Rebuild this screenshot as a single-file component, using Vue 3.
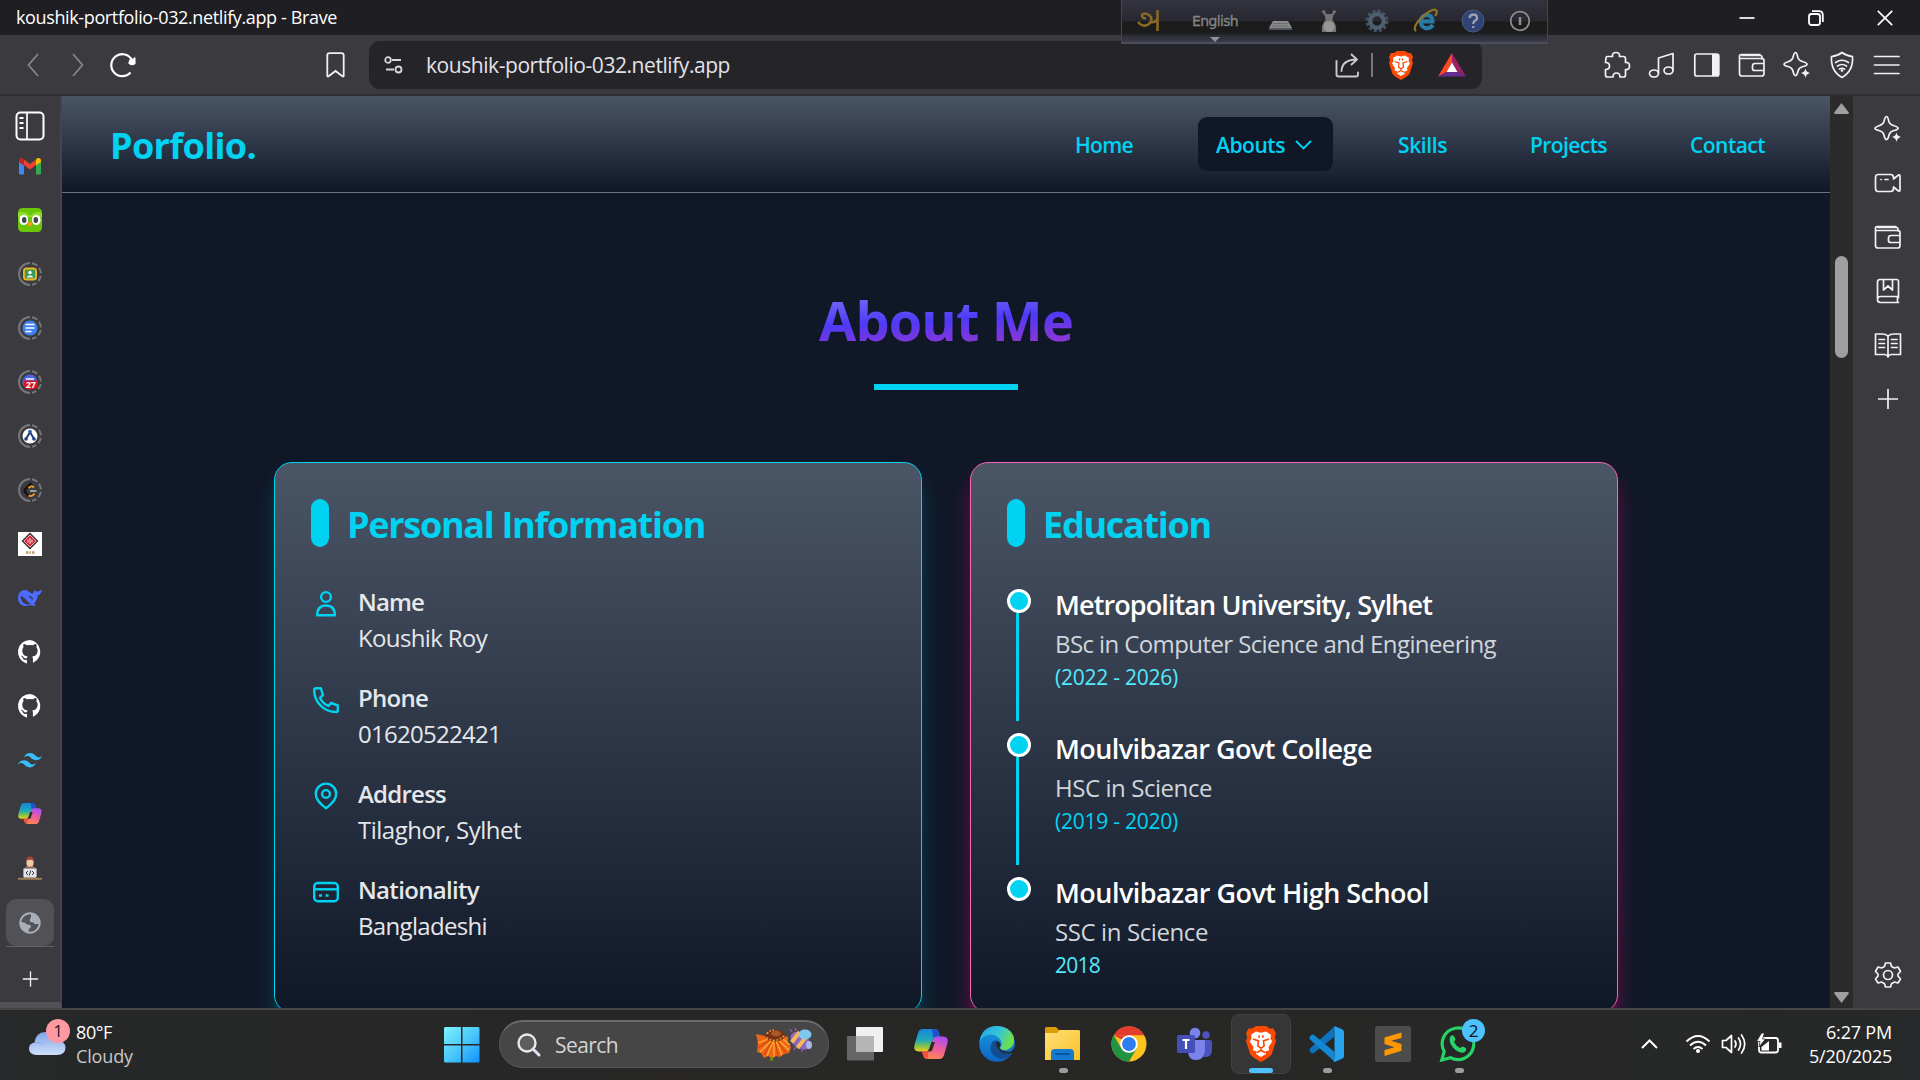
<script setup>
import { h } from 'vue'

const W = 'fill="none" stroke="#f1f1f4" stroke-width="1.7" stroke-linejoin="round" stroke-linecap="round"'
const lion = '<path d="M5 2 8 0H16L19 2 22 2 24 6 23 9 24 12 20.500 23Q18 26 12 29 6 26 3.500 23L0 12 1 9 0 6 2 2Z" fill="#fb4a05"/><path d="M8 4.500 12 5.500 16 4.500 20 7 19.500 10 21 12.500 18 17 18.500 19.500 15.500 20.500 16 22.500 12 25 8 22.500 8.500 20.500 5.500 19.500 6 17 3 12.500 4.500 10 4 7Z" fill="#fff"/><path d="M5.500 10.500 10 12 9.500 16 12 18 14.500 16 14 12 18.500 10.500M12 18V19.500M8.500 21.500 12 19.500 15.500 21.500M10.500 7.500V9.500M13.500 7.500V9.500" fill="none" stroke="#fb4a05" stroke-width="1.300"/>'
const wallet = `<path d="M4 4.500H22.500Q24 4.500 24 6V8M2 7.500H24Q26 7.500 26 9.500V22.500Q26 25 23.500 25H4Q1.500 25 1.500 22.500V5Q1.500 3.500 3.500 3.500H22M26 12.500H17Q14.500 12.500 14.500 15V17.500Q14.500 19.500 17 19.500H26" ${W}/>`
const sparkle = `<path d="M12.500 1.500C14 1.500 14.200 4 15 7 16 9.500 17.500 10 20 10.800 23 11.600 24 12 24 13.200S22.500 14.800 20 15.500C17.500 16.200 16 17 15.200 19.500 14.400 22.500 14 24.500 12.500 24.500S10.600 22.500 9.800 19.500C9 17 7.500 16.200 5 15.500 2.500 14.800 1 14.400 1 13.200S2.500 11.600 5 10.800C7.500 10 9 9.500 9.800 7 10.600 4 11 1.500 12.500 1.500Z" ${W}/><path d="M22.500 17.500Q23 21 27 22 23 23 22.500 27 22 23 18 22 22 21 22.500 17.500Z" fill="#f1f1f4"/>`
const ring = '<path d="M12 1A11 11 0 0 0 12 23" fill="none" stroke="#76777c" stroke-width="2"/><path d="M14 1.200A11 11 0 0 1 14 22.800" fill="none" stroke="#76777c" stroke-width="2" stroke-dasharray="6 2.500"/>'
const github = '<path fill="#fff" d="M12 0a12 12 0 0 0-3.800 23.400c.6.100.8-.3.800-.6v-3c-3.300 1-4-1-4.200-1.700-.2-.400-.7-1.200-1.200-1.500-.4-.2-1-.8 0-.8 1 0 1.600.9 1.900 1.300 1.100 1.800 2.800 1.300 3.500 1 .1-.8.4-1.300.8-1.600-2.700-.3-5.500-1.400-5.500-6 0-1.300.5-2.400 1.200-3.200-.100-.3-.5-1.500.100-3.200 0 0 1-.3 3.300 1.200a11.500 11.500 0 0 1 6 0c2.300-1.500 3.300-1.200 3.300-1.200.7 1.700.3 2.900.2 3.200.7.800 1.200 1.900 1.200 3.200 0 4.600-2.800 5.700-5.500 6 .4.400.8 1.100.8 2.200v3.300c0 .3.2.7.8.6A12 12 0 0 0 12 0z"/>'
const copilot = id => `<defs><linearGradient id="${id}a" x1="0" y1="0" x2="0" y2="1"><stop offset="0" stop-color="#1784dc"/><stop offset=".5" stop-color="#22a9b8"/><stop offset=".75" stop-color="#7dc24a"/><stop offset="1" stop-color="#f5cf1d"/></linearGradient><linearGradient id="${id}b" x1=".6" y1="0" x2=".3" y2="1"><stop offset="0" stop-color="#a950f5"/><stop offset=".5" stop-color="#ee5c9b"/><stop offset="1" stop-color="#fb8a50"/></linearGradient></defs><path d="M9 0H21Q24 0 25 4L26 7.500H23Q20 7.500 19 10L15 20Q14 22.500 11 22.500H5Q-1 22.500 .5 16L4 4Q5 0 9 0Z" fill="url(#${id}a)"/><path d="M18 0H21Q24 0 25 4L26 7.500H23Q20.500 7.500 19.500 9Z" fill="#1a52cf"/><path d="M25 30H13Q10 30 9 26L8 22.500H11Q14 22.500 15 20L19 10Q20 7.500 23 7.500H29Q35 7.500 33.500 14L30 26Q29 30 25 30Z" fill="url(#${id}b)"/><path d="M13.500 30Q10 30 9 26L8 22.500H11Q13 22.500 14.500 21Z" fill="#f3503c"/><path d="M17.500 13H21L18 21.500Q17.500 22.500 16 22.500H13.500Q14.700 21.500 15 20.500Z" fill="#2a2a2a"/>`

const icons = {
  back: [12, 24, '<path d="M11 1 1.500 12 11 23" fill="none" stroke="#85858a" stroke-width="1.800"/>'],
  fwd: [12, 24, '<path d="M1 1 10.500 12 1 23" fill="none" stroke="#85858a" stroke-width="1.800"/>'],
  reload: [27, 26, '<path d="M20.500 20.500A11 11 0 1 1 22 8" fill="none" stroke="#fff" stroke-width="2.200"/><circle cx="22" cy="10" r="3.200" fill="#fff"/><path d="M18.500 11 25 12V5.500Z" fill="#fff" stroke="#fff" stroke-linejoin="round"/>'],
  bookmark: [19, 26, '<path d="M3.500 1.200H15.500Q17.700 1.200 17.700 3.500V23.800Q17.500 25 16.400 24.300L9.500 19 2.600 24.300Q1.500 25 1.300 23.800V3.500Q1.300 1.200 3.500 1.200Z" fill="none" stroke="#f1f1f4" stroke-width="1.800"/>'],
  site: [19, 18, '<g fill="none" stroke="#d8d8dc" stroke-width="1.800"><circle cx="4" cy="4" r="2.800"/><path d="M8 4H17M2 13.500H10"/><circle cx="14.500" cy="13.500" r="3"/></g>'],
  share: [25, 25, '<g fill="none" stroke="#c9c9ce" stroke-width="1.900" stroke-linecap="round" stroke-linejoin="round"><path d="M1.500 8V21.500Q1.500 23.500 3.500 23.500H21Q23 23.500 23 21.500V19.500"/><path d="M6.500 18Q7 7 21 6.500M16.500 1.500 22 6.500 16.500 11.500"/></g>'],
  lion: [24, 29, lion],
  bat: [28, 24, '<path d="M14 0 0 23.500 8.500 19 14 9.500Z" fill="#ff4724"/><path d="M14 0 28 23.500 19.500 19 14 9.500Z" fill="#9e1f63"/><path d="M0 23.500H28L19.500 19H8.500Z" fill="#662d91"/><path d="M14 9.500 8.500 19H19.500Z" fill="#fff"/>'],
  puzzle: [28, 28, `<path d="M3 7Q3 5.500 4.500 5.500H9.500Q9 1.500 13 1.500T16.500 5.500H20.500Q22.500 5.500 22.500 7.500V11.500Q26.500 11 26.500 15T22.500 18.500V24Q22.500 26 20.500 26H17Q17 22 13.500 22T10 26H4.500Q2.500 26 2.500 24V18.500Q6.500 18.500 6.500 15T2.500 11.500Z" ${W}/>`],
  music: [28, 28, `<ellipse cx="6" cy="22.500" rx="4.500" ry="3.500" ${W}/><ellipse cx="20.500" cy="19.500" rx="4.500" ry="3.500" ${W}/><path d="M10.500 22V7L25 2.500V19M10.500 10" ${W}/>`],
  panelR: [28, 28, `<rect x="1.800" y="3" width="24" height="22" rx="2" ${W}/><path d="M19 3H24Q26 3 26 5V23Q26 25 24 25H19Z" fill="#f1f1f4"/>`],
  wallet: [28, 28, wallet],
  leo: [28, 28, sparkle],
  vpn: [28, 28, `<path d="M14 1.500Q18.500 5 24.500 5.500 25.500 20 14 26.500 2.500 20 3.500 5.500 9.500 5 14 1.500Z" ${W}/><path d="M7.500 11.500Q14 7 20.500 11.500M9.500 15Q14 12 18.500 15M11.500 18Q14 16.500 16.500 18" ${W}/><circle cx="14" cy="19.500" r="1.300" fill="#fff"/>`],
  menu: [28, 28, `<path d="M1.500 5.500H26M1.500 14H26M1.500 22.500H26" ${W}/>`],
  cam: [28, 28, `<path d="M4 5.500H16.500Q19.500 5.500 19.500 8.500V10L24.500 6Q26 5.500 26 7V21Q26 22.500 24.500 22L19.500 18V19.500Q19.500 22.500 16.500 22.500H4Q1.500 22.500 1.500 19.500V8.500Q1.500 5.500 4 5.500ZM7 10.500H7.200M11 10.500H14" ${W}/>`],
  book: [28, 28, `<path d="M24.500 20.500V4.500Q24.500 2.500 22.500 2.500H6Q3.500 2.500 3.500 5V22.500Q3.500 25.500 6.500 25.500H24.500M3.500 22Q3.500 19.500 6.500 19.500H24.500M23.500 19.500V25.500M9.500 2.500V13L14 9 18.500 13V2.500" ${W}/>`],
  read: [28, 28, `<path d="M14 5Q12 3 8 3H1.500V23.500H11Q13 23.500 14 26 15 23.500 17 23.500H26.500V3H20Q16 3 14 5ZV25M5 8.500H10.500M5 12.500H10.500M5 16.500H10.500M17.500 8.500H23M17.500 12.500H23M17.500 16.500H23" ${W}/>`],
  plus: [22, 22, '<path d="M11 1V21M1 11H21" stroke="#f1f1f4" stroke-width="1.700"/>'],
  gear: [28, 28, `<path d="M11.500 2H16.500L17.500 5.500 20.500 7 24 6 26.500 10.500 24 13V15L26.500 18 24 22 20.500 21 17.500 22.700 16.500 26H11.500L10.500 22.700 7.500 21 4 22 1.500 18 4 15V13L1.500 10.500 4 6 7.500 7 10.500 5.500Z" ${W}/><circle cx="14" cy="14" r="4.500" ${W}/>`],
  panelL: [30, 30, '<rect x="1.500" y="1.500" width="27" height="27" rx="4" fill="none" stroke="#fff" stroke-width="2"/><path d="M12 2V28" stroke="#fff" stroke-width="1.700"/><path d="M4.500 7H8.500M4.500 12H8.500M4.500 17H8.500" stroke="#fff" stroke-width="2"/>'],
  gmail: [22, 17, '<path d="M0 3V15.500Q0 16.500 1 16.500H5V7Z" fill="#4285f4"/><path d="M22 3V15.500Q22 16.500 21 16.500H17V7Z" fill="#34a853"/><path d="M5 7 11 11.500 17 7V1.500L11 6 5 1.500Z" fill="#ea4335"/><path d="M0 4V2.500C0 0 3-1 5 1.500V7.500Z" fill="#c5221f"/><path d="M22 4V2.500C22 0 19-1 17 1.500V7.500Z" fill="#fbbc04"/>'],
  duo: [24, 24, '<rect width="24" height="24" rx="4.500" fill="#6cc508"/><path d="M0 5Q6 2 12 8 18 2 24 5V9H0Z" fill="#8fe02a"/><rect x="1.500" y="7" width="8.500" height="10" rx="4.200" fill="#fff"/><rect x="14" y="7" width="8.500" height="10" rx="4.200" fill="#fff"/><ellipse cx="6.200" cy="12" rx="2.300" ry="3" fill="#42464c"/><ellipse cx="17.800" cy="12" rx="2.300" ry="3" fill="#42464c"/><path d="M9.500 15Q12 13 14.500 15 13.500 18.500 12 18.500T9.500 15Z" fill="#ff9a1a"/>'],
  classroom: [24, 24, ring + '<rect x="5" y="5.500" width="14" height="13" rx="3.500" fill="#f0b51c"/><rect x="6.900" y="7.400" width="10.200" height="9.200" rx="1" fill="#3c9b5b"/><circle cx="12" cy="10.500" r="1.700" fill="#fff"/><path d="M8.500 15.500Q12 11 15.500 15.500Z" fill="#e6f4ea"/>'],
  docs: [24, 24, ring + '<circle cx="12" cy="12" r="7.500" fill="#3f83f3"/><path d="M7.500 8.500H16.500M7.500 12H16.500M7.500 15.500H13.500" stroke="#fff" stroke-width="1.600"/>'],
  cal: [24, 24, ring + '<circle cx="12" cy="12" r="7.500" fill="#4e62e8"/><path d="M8 9H16" stroke="#fff" stroke-width="1.500"/><path d="M6 10.500H20V17Q18 19.500 12 19.500 7 19.500 6 16Z" fill="#d9141e"/><text x="12.800" y="18" font-size="9" font-weight="700" font-family="Open Sans, sans-serif" text-anchor="middle" fill="#fff">27</text>'],
  graph: [24, 24, ring + '<circle cx="12" cy="12" r="7.500" fill="#fff"/><path d="M12 8 8 15M12 8 16 15" stroke="#21407e" stroke-width="2"/><circle cx="12" cy="7.500" r="1.800" fill="#2e59a8"/><circle cx="8" cy="15" r="1.800" fill="#21407e"/><circle cx="16" cy="15" r="1.800" fill="#21407e"/>'],
  leet: [24, 24, ring + '<path d="M13.500 5 7 11.500Q6 13 7.500 14.500L10.500 18" fill="none" stroke="#111" stroke-width="2.400" stroke-linejoin="round"/><path d="M10.500 10Q13.500 7 16 9.500M10.500 17.500Q14 19.500 16.500 15.500" fill="none" stroke="#f59f1b" stroke-width="1.800"/><path d="M12 13H18.500" stroke="#b7b7b7" stroke-width="1.600"/>'],
  badge: [24, 24, '<rect width="24" height="24" fill="#fff"/><path d="M12 1.500 19.500 9 12 16.500 4.500 9Z" fill="#fff" stroke="#3a2326" stroke-width="1.300"/><path d="M12 3.200 17.800 9 12 14.800 6.200 9Z" fill="#d92136"/><path d="M12 6V12M10 7.500V10.500M14 7.500V10.500" stroke="#fff" stroke-width=".9"/><path d="M8 20.500H10.500M11.500 20.500H13M14 20.500H16.500" stroke="#b9a06a" stroke-width="2.500"/>'],
  whale: [24, 20, '<path d="M0 10C0 4 5 1 9 2.500L13 5C15 6.500 16 4.500 16.500 1.500 17.500 4 19 4 21 3L24 1.500C23.500 5.500 21.500 7 19.500 7.500 19.500 12 17 14.500 16 15.500L18 17.500C15 18.500 13.500 17 12.500 17 6 20 0 16.500 0 10Z" fill="#4d6bfe"/><path d="M2.500 8Q6 8.500 9.500 13.500 11.500 15.500 13 15.500 8 18 4.500 14 2.500 11.500 2.500 8Z" fill="#3b3a3f"/><path d="M11 9Q13 8 14.500 11.500" stroke="#3b3a3f" stroke-width="1.500" fill="none"/>'],
  github: [24, 24, github],
  tailwind: [24, 15, '<path d="M12 0c-3.200 0-5.200 1.600-6 4.800 1.200-1.600 2.600-2.200 4.200-1.800.91.230 1.570.890 2.290 1.620C13.660 5.820 15.030 7.200 18 7.200c3.200 0 5.200-1.600 6-4.800-1.200 1.600-2.600 2.200-4.200 1.800-.91-.23-1.570-.89-2.290-1.620C16.340 1.380 14.970 0 12 0zM6 7.200c-3.200 0-5.200 1.600-6 4.800 1.200-1.600 2.600-2.200 4.200-1.800.91.230 1.570.890 2.290 1.620C7.660 13.020 9.030 14.400 12 14.400c3.200 0 5.200-1.600 6-4.800-1.200 1.600-2.600 2.200-4.200 1.800-.91-.23-1.570-.89-2.290-1.620C10.340 8.580 8.970 7.200 6 7.200z" fill="#38bdf8"/>'],
  copilotS: [24, 22, `<g transform="scale(.7)">${copilot('cs')}</g>`],
  dev: [24, 24, '<path d="M5.500 14Q6 10 12 10T18.500 14Z" fill="#d98860"/><rect x="8.500" y="2.500" width="7" height="8" rx="3" fill="#f3c9a5"/><path d="M8 5Q8 .5 12 .5T16 5Q12 2.500 8 5Z" fill="#a3453a"/><rect x="5" y="12" width="14" height="10" rx="1" fill="#e3e5ea" stroke="#33343a" stroke-width=".8"/><path d="M10 15 8 17 10 19M14 15 16 17 14 19M12.700 14.500 11.300 19.500" fill="none" stroke="#33343a" stroke-width="1"/><path d="M0 22.800H24" stroke="#a8834f" stroke-width="1.800"/>'],
  globe: [22, 22, '<circle cx="11" cy="11" r="9.700" fill="#54555a" stroke="#a9afb8" stroke-width="2"/><path d="M12 2V5Q10 8 11.500 10 15 9.500 15.500 12L20.500 12Q20 3 12 2ZM1.500 10Q6 9.500 8 12.500 12 12 12 15.500 9.500 15.500 9.500 20.500 2 19 1.500 10Z" fill="#a9afb8"/>'],
  weather: [37, 24, '<defs><linearGradient id="wc" x1="0" y1="0" x2="0" y2="1"><stop offset="0" stop-color="#7fa3e6"/><stop offset="1" stop-color="#cfe0fa"/></linearGradient></defs><path d="M8 23Q0 23 0 16.500 0 11.500 5.500 10.500 7 0 16 0 24 0 26.500 8.500 36.500 8 36.500 16 36 23 28 23Z" fill="url(#wc)"/><path d="M6 11Q12 9.500 14.500 13" stroke="#87a8e4" fill="none"/>'],
  win: [36, 36, '<defs><linearGradient id="wl" gradientUnits="userSpaceOnUse" x1="0" y1="0" x2="36" y2="36"><stop offset="0" stop-color="#7df3ff"/><stop offset=".5" stop-color="#4cc8fb"/><stop offset="1" stop-color="#0d8ffb"/></linearGradient></defs><path fill="url(#wl)" d="M1 0H17V17H0V1ZM18.500 0H34Q35.500 0 35.500 1V17H18.500ZM0 18.500H17V35.500H1.500Q0 35.500 0 34ZM18.500 18.500H35.500V34Q35.500 35.500 34 35.500H18.500Z"/>'],
  search: [24, 24, '<circle cx="10" cy="10" r="8.500" fill="#5d5d5d" stroke="#e8e9ee" stroke-width="2.400"/><path d="M16 16 22 22" stroke="#dfe2f0" stroke-width="3" stroke-linecap="round"/>'],
  flower: [58, 34, '<path d="M14 26H18L17 33H14Z" fill="#5f8a1c"/><path d="M0 6 9 8 18 5 32 9 32 15 35 19 33 25 28 26 24 29 20 28 16 30 12 28 8 30 5 25 1 24 2 15Z" fill="#f0641a"/><path d="M16 12 4 24M17 13 11 28M18 13 18 29M20 13 26 27M22 12 33 22M12 11 2 15M27 11 34 17" stroke="#ffb02a" stroke-width="1.300"/><path d="M16 13 8 27M19 13 22 28M21 12 30 25M14 12 2 20" stroke="#c93d10" stroke-width="1"/><ellipse cx="19" cy="7.500" rx="10" ry="6" fill="#7a3212"/><ellipse cx="20" cy="5.500" rx="5" ry="3" fill="#a8592a"/><path d="M10.500 9.500Q19 16 28 8M11 6Q13 2.500 18 2" fill="none" stroke="#e8a33a" stroke-width="1.500" stroke-dasharray="2 1.500"/><g transform="rotate(38 45 12)"><ellipse cx="45" cy="13" rx="11" ry="7.500" fill="#8f67b8"/><path d="M39 6.500V19.500M47 5.500V20.500" stroke="#f9b95a" stroke-width="4"/></g><ellipse cx="49" cy="6.500" rx="6.500" ry="5" fill="#7fc7ef"/><ellipse cx="53" cy="17" rx="3" ry="4" fill="#a9b8ea"/><path d="M36 4 34 1M40 3 39 0M40 18 38 22M46 20 46 24" stroke="#7d5ab0" stroke-width="1.500"/>'],
  taskview: [37, 34, '<rect x="9" y="0" width="27" height="25" rx="1" fill="#f0f0f0"/><rect x="0" y="9" width="27" height="24.500" rx="1" fill="#7c7c7c" fill-opacity=".75"/><rect x="9" y="9" width="18" height="16" fill="#b5b5b5"/>'],
  copilot: [34, 30, copilot('cl')],
  edge: [36, 36, '<defs><linearGradient id="e1" x1="0" y1="0" x2="1" y2=".4"><stop offset="0" stop-color="#1fa4e0"/><stop offset=".55" stop-color="#35c3dc"/><stop offset="1" stop-color="#6be04f"/></linearGradient><linearGradient id="e2" x1="0" y1="0" x2="0" y2="1"><stop offset="0" stop-color="#1a9be0"/><stop offset="1" stop-color="#0c63c4"/></linearGradient></defs><circle cx="18" cy="18" r="17.800" fill="url(#e2)"/><path d="M.5 15.500Q3 0 18 0 30 0 34.500 10 37 20 29 23.500 22 25 21 22 23.500 19 22 15 19 9 12 8.500 4 9 .5 15.500Z" fill="url(#e1)"/><path d="M14 15Q9 22 13.500 28 20 36 30 31 34 28 32 27 24 29 20 24 18.500 21 21 18 19 13 14 15Z" fill="#124d92"/><path d="M20.500 22Q23 26.500 32 25.500L36 21V30L33 27Q24 29 20 24Z" fill="#272727"/><path d="M18 15Q22 16 21.500 20 19.500 22 20 24 16 21 18 15Z" fill="#272727"/>'],
  folder: [36, 34, '<defs><linearGradient id="fo" x1="0" y1="0" x2="1" y2="1"><stop offset="0" stop-color="#ffe07a"/><stop offset="1" stop-color="#f9bf26"/></linearGradient></defs><path d="M0 1.500Q0 0 1.500 0H11L14 3H33V10H0Z" fill="#dc9c08"/><path d="M0 6H12L15 3H34Q35 3 35 4.500V32.500Q35 33 34 33H0Z" fill="url(#fo)"/><path d="M6 33V26Q6 22 10 22H25Q29 22 29 26V33Z" fill="#1479cf"/><path d="M10.500 27H24.500" stroke="#0a4f93" stroke-width="1.700"/>'],
  chrome: [36, 36, '<circle cx="18" cy="18" r="17.500" fill="#fcc31e"/><path d="M2.800 9.200A17.500 17.500 0 0 1 33.200 9.200L18 9.200Z" fill="#e33b2e"/><path d="M33.200 9.200H18L10.400 13.600 2.800 9.200Z" fill="#e33b2e"/><path d="M2.800 9.200A17.500 17.500 0 0 0 18 35.500L25.600 22.400 18 26.800 10.400 22.400Z" fill="#229342"/><circle cx="18" cy="18" r="8.800" fill="#fff"/><circle cx="18" cy="18" r="6.900" fill="#2f7cf0"/>'],
  teams: [36, 36, '<circle cx="29" cy="9" r="3.700" fill="#4b53bc"/><circle cx="18" cy="7" r="5.300" fill="#7b83eb"/><path d="M25 14H33Q35 14 35 16V24Q35 31 29 31H25Z" fill="#4b53bc"/><path d="M11 14H27Q28 14 28 15.500V24Q27 34 19 34T11 25Z" fill="#7b83eb"/><rect y="9" width="18" height="18" rx="1.500" fill="#464eb8"/><path d="M5.500 14H12.500M9 14V23" stroke="#fff" stroke-width="2.200"/>'],
  lionBig: [30, 36, `<g transform="scale(1.250 1.241)">${lion}</g>`],
  vscode: [36, 36, '<path d="M26 0 25 11 5 27Q3 28 2 26.500L.5 25Q0 23.500 1 22.500Z" fill="#0d72bd"/><path d="M26 36 25 25.500 5 9Q3 8 2 9.500L.5 11Q0 12.500 1 13.500Z" fill="#1389d6"/><path d="M25.500 0 33.500 3.500Q35 4.500 35 6V30Q35 31.500 33.500 32.500L25.500 36Q24 35.500 25.500 33V3Z" fill="#28a4ef"/>'],
  sublime: [36, 36, '<rect width="36" height="36" rx="2.500" fill="#4c4c4d"/><path d="M26.500 6.500 9.500 11.500V18L19.500 21.200 9.500 24V30L26.500 24.800V18L16 14.700 26.500 12Z" fill="#ff9800"/>'],
  whatsapp: [38, 38, '<path d="M1.800 35 4.200 26.500A15.800 15.800 0 1 1 10.500 32.700Z" fill="none" stroke="#25d366" stroke-width="3.200"/><path d="M10 12Q12 9 14 11L15.500 14.500 14 17Q16 21 20 23L22.500 21.500 26 23Q27 25.500 24 27.500 18 28.500 13 22.500 8.500 17 10 12Z" fill="#25d366"/>'],
  up: [17, 10, '<path d="M1 9 8.500 1.500 16 9" fill="none" stroke="#fff" stroke-width="2"/>'],
  wifi: [26, 20, '<g fill="none" stroke="#fff" stroke-width="1.900"><path d="M1.500 7.500Q13-3.500 24.500 7.500M5 11.500Q13 4 21 11.500M8.500 15Q13 11 17.500 15"/></g><circle cx="13" cy="17" r="2" fill="#fff"/>'],
  sound: [26, 22, '<g fill="none" stroke="#fff" stroke-width="1.700" stroke-linejoin="round" stroke-linecap="round"><path d="M1.500 7.500H5L10.500 2.500V19.500L5 14.500H1.500Z"/><path d="M14 8Q16 11 14 14M17.500 5Q21.500 11 17.500 17M20.500 2Q27 11 20.500 20"/></g>'],
  battery: [26, 22, '<rect x="2" y="5" width="19" height="14.500" rx="2.500" fill="none" stroke="#fff" stroke-width="1.800"/><path d="M22 9.500H24.500V15H22Z" fill="#fff"/><path d="M4.500 17.500V14L12 8V17.500Z" fill="#fff"/><path d="M4.500 0-.5 8.500H3L2 14 8.500 6H5.500L7.500 0Z" fill="#fff" stroke="#272727" stroke-width=".8"/>'],
  min: [16, 16, '<path d="M.5 8H15.500" stroke="#fff" stroke-width="1.700"/>'],
  restore: [16, 16, '<g fill="none" stroke="#fff" stroke-width="1.800"><rect x="1" y="4" width="11" height="11" rx="2.500"/><path d="M4 1.200H11Q14.800 1.200 14.800 5V12"/></g>'],
  close: [16, 16, '<path d="M.8.800 15.200 15.200M15.200.8.800 15.200" stroke="#fff" stroke-width="1.700"/>'],
  chevron: [17, 10, '<path d="M1 1 8.500 8.500 16 1" fill="none" stroke="#00d3f2" stroke-width="1.900"/>'],
  user: [30, 30, '<g fill="none" stroke="#00d3f2" stroke-width="2.400" stroke-linejoin="round"><circle cx="15" cy="8" r="4.900"/><path d="M6.200 26.200Q6.200 16.500 15 16.500T23.800 26.200Z"/></g>'],
  phone: [30, 30, '<path d="M9.800 3.200H5Q3.200 3.200 3.200 5 3.200 14 9.500 20.500T25 27Q26.800 27 26.800 25V20.500L20 18 17.500 21Q11.500 18.500 9 12.800L12 10Z" fill="none" stroke="#00d3f2" stroke-width="2.400" stroke-linejoin="round"/>'],
  pin: [30, 30, '<g fill="none" stroke="#00d3f2" stroke-width="2.400" stroke-linejoin="round"><path d="M15 27.300Q4.800 20 4.800 12.800A10.200 10.200 0 0 1 25.200 12.800Q25.200 20 15 27.300Z"/><circle cx="15" cy="13" r="3.900"/></g>'],
  card: [30, 30, '<g fill="none" stroke="#00d3f2" stroke-width="2.400"><rect x="3.200" y="6" width="23.600" height="18.300" rx="3.500"/><path d="M3.200 12.300H26.800"/></g><path d="M8 18.500H11M14.500 18.500H17.500" stroke="#00d3f2" stroke-width="2.600"/>'],
  bangla: [24, 24, '<path d="M1 13Q6 19 12 15 17 10 12 6 7 3 5 6 5 10 9 9" fill="none" stroke="#8a6a22" stroke-width="2.600"/><path d="M13 13Q17 14 20 11M20.500 1V22" fill="none" stroke="#8a6a22" stroke-width="2.600"/>'],
  kbd: [24, 14, '<path d="M4 3H19L23 10H0Z" fill="#8b8b8b"/><path d="M0 10H23V12H0Z" fill="#4d5560"/><path d="M4.500 5.500H18.500M3 8H20" stroke="#5a5a5a" stroke-dasharray="1.500 1"/>'],
  mouse: [18, 24, '<path d="M1.500 2 5 7 5.500 11Q1 16 2 23H16Q17 16 12.500 11L13 7 16.500 2 13.500 1 12 5H6L4.500 1Z" fill="#747474"/><ellipse cx="9" cy="17.500" rx="5.500" ry="5.500" fill="#969696"/>'],
  cog: [24, 24, '<circle cx="12" cy="12" r="9.500" fill="none" stroke="#44525f" stroke-width="4" stroke-dasharray="3 2"/><circle cx="12" cy="12" r="6.800" fill="none" stroke="#4e6070" stroke-width="4.200"/>'],
  ie: [26, 26, '<path d="M20 17Q17 21 12 20 7 18 8 12 9 7 14 7T19.500 13.500H9" fill="none" stroke="#2a7aa6" stroke-width="4"/><path d="M3 23Q-1 20 8 10 19 0 23 2 25 4 22 8" fill="none" stroke="#8d7426" stroke-width="2.200"/>'],
  help: [24, 24, '<circle cx="12" cy="12" r="11" fill="#2f4379" stroke="#4f5b7c"/><path d="M8.500 9Q9 5.500 12.500 5.500T16 9Q16 11 13.500 12 12.300 13 12.300 15M12.300 17V19" fill="none" stroke="#9da0aa" stroke-width="2.300"/>'],
  info: [22, 22, '<circle cx="11" cy="11" r="9.300" fill="none" stroke="#8d8d90" stroke-width="1.800"/><path d="M11 7V15" stroke="#8d8d90" stroke-width="2.600"/>'],
}

const Ico = p => {
  const [w, ht, body] = icons[p.n]
  return h('svg', { viewBox: `0 0 ${w} ${ht}`, width: w, height: ht, innerHTML: body })
}
Ico.props = ['n']

/* Spreads a line of text over the given advance width. */
const vFit = {
  mounted(el, { value }) {
    const w = el.getBoundingClientRect().width
    el.style.letterSpacing = `${(value - w) / el.textContent.length}px`
  },
}

const toolbar = ['puzzle', 'music', 'panelR', 'wallet', 'leo', 'vpn', 'menu']
const tabs = ['duo', 'classroom', 'docs', 'cal', 'graph', 'leet', 'badge', 'whale', 'github', 'github', 'tailwind', 'copilotS', 'dev']
const side = ['leo', 'cam', 'wallet', 'book', 'read', 'plus']
const facts = [
  { icon: 'user', label: 'Name', lw: 66, value: 'Koushik Roy', vw: 129 },
  { icon: 'phone', label: 'Phone', lw: 70, value: '01620522421', vw: 143 },
  { icon: 'pin', label: 'Address', lw: 88, value: 'Tilaghor, Sylhet', vw: 163 },
  { icon: 'card', label: 'Nationality', lw: 121, value: 'Bangladeshi', vw: 129 },
]
const schools = [
  { name: 'Metropolitan University, Sylhet', nw: 377, course: 'BSc in Computer Science and Engineering', cw: 441, years: '(2022 - 2026)', yw: 123 },
  { name: 'Moulvibazar Govt College', nw: 317, course: 'HSC in Science', cw: 157, years: '(2019 - 2020)', yw: 123, deep: true },
  { name: 'Moulvibazar Govt High School', nw: 374, course: 'SSC in Science', cw: 153, years: '2018', yw: 45 },
]
const apps = [
  { n: 'taskview' }, { n: 'copilot' }, { n: 'edge' }, { n: 'folder', run: true }, { n: 'chrome' }, { n: 'teams' },
  { n: 'lionBig', active: true }, { n: 'vscode', run: true }, { n: 'sublime' }, { n: 'whatsapp', run: true, count: 2 },
]
</script>

<template>
  <div class="screen">
    <div class="titlebar">
      <span v-fit="321" class="title">koushik-portfolio-032.netlify.app - Brave</span>
      <div class="winbtns"><Ico n="min" /><Ico n="restore" /><Ico n="close" /></div>
    </div>

    <div class="toolbar">
      <Ico n="back" class="t-back" /><Ico n="fwd" class="t-fwd" /><Ico n="reload" class="t-reload" />
      <Ico n="bookmark" class="t-mark" />
      <div class="urlbar">
        <Ico n="site" />
        <span v-fit="304" class="url">koushik-portfolio-032.netlify.app</span>
        <div class="urlicons"><Ico n="share" /><i class="bar"></i><Ico n="lion" /><Ico n="bat" /></div>
      </div>
      <div class="tools"><Ico v-for="t in toolbar" :key="t" :n="t" /></div>
    </div>

    <div class="langbar">
      <Ico n="bangla" />
      <span class="lang"><span v-fit="46">English</span><i></i></span>
      <Ico n="kbd" class="kbd" /><Ico n="mouse" class="mouse" /><Ico n="cog" /><Ico n="ie" class="ie" /><Ico n="help" /><Ico n="info" />
    </div>

    <div class="middle">
      <aside class="left">
        <div class="panel"><Ico n="panelL" /></div>
        <div class="mail"><Ico n="gmail" /></div>
        <div v-for="(t, i) in tabs" :key="i" class="tab"><Ico :n="t" /></div>
        <div class="tab on"><Ico n="globe" /></div>
        <div class="add"><Ico n="plus" /></div>
      </aside>

      <main class="page">
        <header class="head">
          <span v-fit="146" class="logo">Porfolio.</span>
          <nav>
            <a><span v-fit="58">Home</span></a>
            <a class="cur"><span v-fit="69">Abouts</span><Ico n="chevron" /></a>
            <a><span v-fit="49">Skills</span></a>
            <a><span v-fit="77">Projects</span></a>
            <a><span v-fit="75">Contact</span></a>
          </nav>
        </header>
        <h1><span v-fit="254">About Me</span></h1>
        <div class="rule"></div>
        <div class="cards">
          <section class="card cyan">
            <h2><i></i><span v-fit="358">Personal Information</span></h2>
            <div v-for="f in facts" :key="f.label" class="fact">
              <Ico :n="f.icon" />
              <div>
                <div><b v-fit="f.lw">{{ f.label }}</b></div>
                <div><span v-fit="f.vw">{{ f.value }}</span></div>
              </div>
            </div>
          </section>
          <section class="card pink">
            <h2><i></i><span v-fit="168">Education</span></h2>
            <div v-for="s in schools" :key="s.name" class="school">
              <div class="track"><i></i></div>
              <div>
                <div class="name"><b v-fit="s.nw">{{ s.name }}</b></div>
                <div class="course"><span v-fit="s.cw">{{ s.course }}</span></div>
                <div class="years" :class="{ deep: s.deep }"><span v-fit="s.yw">{{ s.years }}</span></div>
              </div>
            </div>
          </section>
        </div>
      </main>

      <div class="scroll"><i class="tri"></i><i class="thumb"></i><i class="tri down"></i></div>
      <aside class="right">
        <div v-for="s in side" :key="s"><Ico :n="s" /></div>
        <div class="settings"><Ico n="gear" /></div>
      </aside>
    </div>

    <footer class="taskbar">
      <div class="weather">
        <div class="cloud"><Ico n="weather" /><em>1</em></div>
        <div class="lines"><div><span v-fit="36">80°F</span></div><div class="dim"><span v-fit="57">Cloudy</span></div></div>
      </div>
      <Ico n="win" class="start" />
      <div class="search"><Ico n="search" /><span v-fit="63">Search</span><Ico n="flower" class="flower" /></div>
      <div class="apps">
        <div v-for="a in apps" :key="a.n" class="app" :class="{ active: a.active, run: a.run }">
          <div class="plate"><Ico :n="a.n" /><em v-if="a.count">{{ a.count }}</em></div>
        </div>
      </div>
      <div class="tray">
        <Ico n="up" /><Ico n="wifi" class="wifi" /><Ico n="sound" /><Ico n="battery" />
        <div class="clock"><div><span v-fit="66">6:27 PM</span></div><div><span v-fit="83">5/20/2025</span></div></div>
      </div>
    </footer>
  </div>
</template>

<style>
html, body { background: #101828; overflow: hidden; }
</style>

<style scoped>
* { box-sizing: border-box; }
.screen { position: relative; width: 1920px; height: 1080px; overflow: hidden; display: flex; flex-direction: column; font-family: "Open Sans", "Noto Sans", sans-serif; white-space: nowrap; color: #fff; }
svg { display: block; flex: none; overflow: visible; }
span, b { display: inline-block; }
i, em { font-style: normal; display: block; }

.titlebar { height: 35px; background: #1f1e23; display: flex; justify-content: space-between; align-items: center; padding: 0 27px 0 16px; flex: none; }
.title { font-size: 18px; line-height: 35px; }
.winbtns { display: flex; gap: 53px; }

.toolbar { height: 61px; border-bottom: 2px solid #2f2e33; background: #3b3a3f; display: flex; align-items: center; flex: none; padding-right: 19px; }
.t-back { margin-left: 27px; }
.t-fwd { margin-left: 33px; }
.t-reload { margin-left: 26px; }
.t-mark { margin-left: 189px; }
.urlbar { margin-left: 24px; width: 1113px; height: 48px; margin-top: 1px; border-radius: 11px; background: #252429; display: flex; align-items: center; padding: 0 16px 0 15px; }
.url { margin-left: 23px; padding-top: 1px; font-size: 21px; line-height: 47px; color: #e2e2e8; }
.urlicons { margin-left: auto; display: flex; align-items: center; gap: 0; }
.urlicons .bar { width: 2px; height: 24px; background: #77777c; margin: 0 16px 0 11px; }
.urlicons svg:last-child { margin-left: 25px; }
.tools { display: flex; gap: 17px; margin-left: auto; }

.langbar { position: absolute; left: 1121px; top: 0; width: 427px; height: 44px; border: 1px solid #45454f; border-top: 0; border-bottom: 2px solid #4b4c5c; background: linear-gradient(#33343f 0, #26272f 21px, #1b1b1b 22px, #1c1c1e 33px, #2c2d38 36px, #3a3b4a 42px); display: flex; align-items: center; padding-left: 15px; gap: 24px; }
.lang { font-size: 14px; line-height: 18px; color: #858585; margin: 1px 7px 0; font-family: "DejaVu Sans", "Open Sans", sans-serif; -webkit-text-stroke: .3px #858585; }
.lang i { width: 0; margin: 7px auto -10px; border: 5px solid transparent; border-top-color: #92929a; border-bottom: 0; }
.langbar .kbd { margin-top: 8px; }
.mouse { margin: 0 3px; }
.ie { margin-right: -2px; }

.middle { flex: 1; display: flex; min-height: 0; }
.left { width: 62px; background: #3b3a3f; border-right: 2px solid #454449; border-bottom: 6px solid #525156; display: flex; flex-direction: column; align-items: center; }
.panel { height: 60px; display: flex; align-items: center; flex: none; }
.mail { height: 40px; display: flex; align-items: flex-start; padding-top: 2px; flex: none; }
.tab { height: 48px; width: 48px; margin-bottom: 6px; display: flex; align-items: center; justify-content: center; flex: none; }
.on { background: #525156; border-radius: 10px; margin: 1px 0 0; height: 47px; }
.add { width: 48px; border-top: 1px solid #626167; height: 64px; display: flex; align-items: center; justify-content: center; flex: none; }
.add svg { width: 17px; }
.left { justify-content: flex-start; overflow: hidden; }

.page { width: 1768px; background: #101828; overflow: hidden; display: flex; flex-direction: column; }
.head { height: 97px; flex: none; border-bottom: 1px solid #6a7282; background: linear-gradient(#4a5565, #101828); display: flex; justify-content: space-between; align-items: center; padding: 0 47px 0 48px; color: #00d3f2; }
.logo { font-size: 36px; font-weight: 700; line-height: 54px; padding-top: 4px; }
nav { display: flex; align-items: center; gap: 47px; font-size: 21px; font-weight: 600; }
nav a { height: 54px; line-height: 52px; padding: 2px 18px 0; display: flex; align-items: center; }
nav .cur { background: #101828; border-radius: 9px; width: 135px; gap: 10px; }
h1 { margin: 91px 212px 0; text-align: center; font-size: 54px; line-height: 72px; font-weight: 700; color: transparent; background: linear-gradient(to bottom right, #a3b3ff, #4f39f6 50%, #f6339a); background-clip: text; -webkit-background-clip: text; }
.rule { width: 144px; height: 6px; background: #00d3f2; margin: 28px auto 72px; flex: none; }
.cards { display: flex; gap: 48px; padding: 0 212px; flex: none; }
.card { width: 648px; height: 551px; border: 1px solid #00d3f2; border-radius: 18px; background: linear-gradient(#4a5565, #101828); padding: 36px; }
.cyan { box-shadow: 0 15px 22.5px -4.5px rgba(0, 211, 242, .28), 0 6px 9px -6px rgba(0, 211, 242, .28); }
.pink { border-color: #f765b8; box-shadow: 0 15px 22.5px -4.5px rgba(230, 0, 118, .55), 0 6px 9px -6px rgba(230, 0, 118, .55); }
h2 { margin: 0 0 36px; height: 48px; display: flex; gap: 18px; font-size: 36px; font-weight: 700; line-height: 52px; color: #00d3f2; }
h2 i { width: 18px; height: 48px; border-radius: 9px; background: #00d3f2; }
.fact { display: flex; gap: 17px; font-size: 24px; line-height: 36px; color: #e5e7eb; margin-bottom: 24px; }
.fact > svg { margin-top: 6px; }
.fact > div { padding-top: 1px; margin-bottom: -1px; }
b { font-weight: 600; }
.school { display: flex; gap: 24px; height: 144px; }
.school > div:last-child { padding-top: 1px; }
.track { width: 24px; padding-top: 6px; }
.track i { width: 24px; height: 24px; border: 3px solid #fff; border-radius: 50%; background: #00d3f2; }
.track::after { content: ""; display: block; width: 3px; height: 108px; margin-left: 9px; background: #00d3f2; }
.school:last-child .track::after { display: none; }
.name { font-size: 27px; line-height: 42px; }
.course { font-size: 24px; line-height: 36px; color: #d1d5dc; }
.years { font-size: 21px; line-height: 31px; color: #53eafd; }
.deep { color: #00d3f2; }

.scroll { width: 23px; background: #2b2b2b; display: flex; flex-direction: column; align-items: center; padding: 7px 0 5px; }
.tri { width: 15px; height: 11px; background: #9f9f9f; clip-path: polygon(50% 0, 100% 88%, 95% 100%, 5% 100%, 0 88%); }
.down { transform: rotate(180deg); margin-top: auto; }
.thumb { width: 13px; height: 102px; border-radius: 7px; background: #9f9f9f; margin-top: 142px; }
.right { width: 67px; background: #3b3a3f; display: flex; flex-direction: column; padding: 6px 0 6px 2px; align-items: center; }
.right div { height: 54px; display: flex; align-items: center; }
.right .settings { margin-top: auto; }

.taskbar { height: 72px; flex: none; border-top: 2px solid #454545; background: linear-gradient(90deg, #262829, #282726 35%, #272726 70%, #262829); display: flex; align-items: center; padding-bottom: 2px; }
.weather { display: flex; margin-left: 29px; width: 415px; gap: 10px; }
.cloud { position: relative; padding-top: 11px; width: 37px; }
.cloud em { position: absolute; left: 17px; top: -2px; width: 24px; height: 24px; border-radius: 50%; background: #ff99a3; color: #222; font-size: 17px; line-height: 24px; text-align: center; }
.lines { font-size: 18px; line-height: 24px; margin-top: -1px; }
.dim { color: #c8c8c8; }
.start { margin-top: 1px; }
.search { margin-left: 19px; width: 330px; height: 48px; border-radius: 24px; background: #464646; border: 1px solid #585858; border-top: 2px solid #6a6a6a; display: flex; align-items: center; padding: 0 14px 0 17px; font-size: 21px; color: #d4d4d4; }
.search span { margin-left: 14px; }
.flower { margin-left: auto; }
.apps { display: flex; margin-left: 3px; }
.app { width: 66px; display: flex; flex-direction: column; align-items: center; height: 60px; position: relative; flex: none; }
.plate { width: 60px; height: 60px; border-radius: 8px; display: flex; align-items: center; justify-content: center; position: relative; }
.active .plate { background: #363636; border: 1px solid #424242; }
.run::after, .active::after { content: ""; position: absolute; bottom: 1px; width: 9px; height: 5px; border-radius: 3px; background: #9c9c9c; }
.active::after { width: 24px; background: #4cc2ff; }
.plate em { position: absolute; right: 4px; top: 5px; width: 23px; height: 23px; border-radius: 50%; background: #4cc2ff; color: #111; font-size: 17px; line-height: 23px; text-align: center; }
.tray { margin-left: auto; margin-right: 28px; display: flex; align-items: center; gap: 10px; }
.wifi { margin-left: 17px; }
.clock { margin-left: 15px; width: 84px; text-align: right; font-size: 18px; line-height: 24px; margin-top: -1px; }
</style>
